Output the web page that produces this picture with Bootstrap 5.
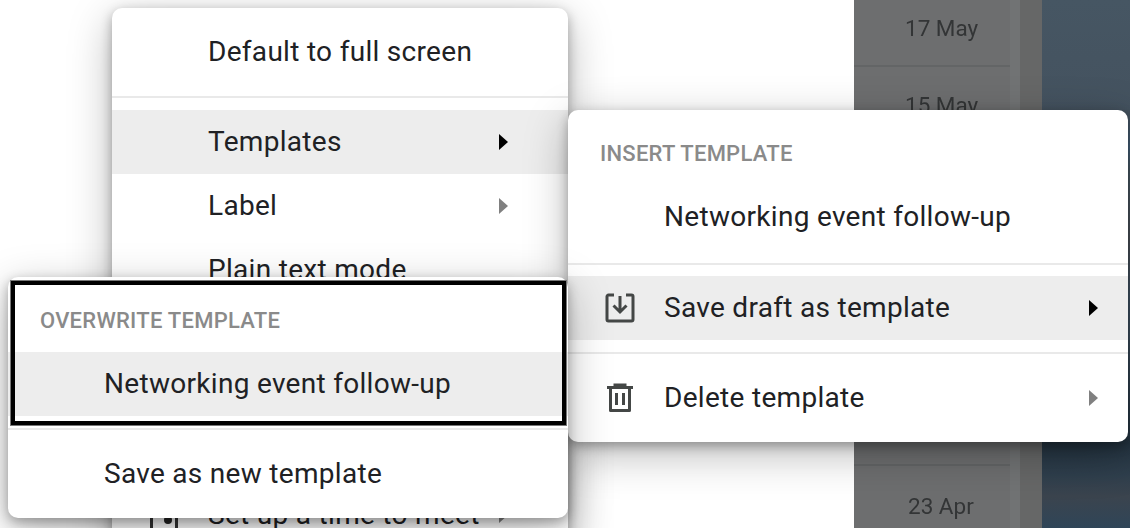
<!DOCTYPE html>
<html lang="en">
<head>
<meta charset="utf-8">
<title>Templates menu</title>
<link href="https://cdn.jsdelivr.net/npm/bootstrap@5.3.0/dist/css/bootstrap.min.css" rel="stylesheet">
<style>
html,body{width:1130px;height:528px;overflow:hidden;margin:0;background:#fff;font-family:Roboto,"Liberation Sans",sans-serif}
.stage{position:relative;width:1130px;height:528px;overflow:hidden}
.blank-area{width:854px}
.mail-list{width:156px;background:#6d6e6f;color:#333536;font-size:22.5px}
.date-text{filter:blur(.5px)}
.date-row{border-bottom:2px solid #636566;padding-left:51px;line-height:1}
.date-row.top{height:67px;padding-top:17px}
.date-row.mid{height:399px;padding-top:27px;overflow:hidden}
.date-row.low{height:62px;padding-left:54px;border:0;padding-top:29px}
.scroll-track{width:10px;background:#717374}
.scroll-gap{width:22px;background:#666767}
.photo{flex:1;background:linear-gradient(#465663 0,#44525f 22%,#44607a 28%,#485965 32%,#4a5058 46%,#3f5264 56%,#3a4c5c 64%,#243441 84%,#2f3f4d 90%,#3b444e 94%,#2f4558 100%)}
.menu-panel{position:absolute;display:block;margin:0;padding:0;background:#fff;border:0;border-radius:10px;color:#202124;font-size:26px;box-shadow:0 4px 12px rgba(0,0,0,.3),0 12px 44px rgba(0,0,0,.28);min-width:0}
.main-panel{left:112px;top:8px;width:456px;height:560px;z-index:1}
.right-panel{left:568px;top:110px;width:560px;height:332px;z-index:2}
.left-panel{left:8px;top:277px;width:560px;height:241px;z-index:3}
.menu-row{height:64px;display:flex;align-items:center;padding:0 32px 0 96px;color:#202124;font-size:28px;letter-spacing:.3px;line-height:1;position:relative;white-space:nowrap}
.menu-row.on{background:#ededed}
.left-panel .menu-row,.right-panel .menu-row{padding-left:96px}
.rule{height:2px;background:#e9e9e9;margin:0;border:0;opacity:1}
.head-row{color:#8a8a8a;font-size:22px;font-weight:500;letter-spacing:.25px;padding:0 32px;line-height:1;text-transform:uppercase}
.arrow{position:absolute;right:60px;top:50%;margin-top:-8px;width:0;height:0;border-left:9px solid #000;border-top:8px solid transparent;border-bottom:8px solid transparent}
.right-panel .arrow{right:30px}
.arrow.dim{border-left-color:#808080}
.row-icon{position:absolute;left:36px;top:50%;margin-top:-16px;width:32px;height:32px}
.peek-icon{left:38px;margin-top:-10px;width:28px;height:28px}
.mark-box{position:absolute;left:10px;top:280px;width:557px;height:146px;border:5px solid #000;outline:1px solid #777;outline-offset:-1px;z-index:4;pointer-events:none}
.gap-a{height:11px}.gap-b{height:13px}.gap-c{height:12px}.gap-d{height:14px}.gap-tail{height:181px}
.head-tall{padding-top:33px;height:75px}
</style>
</head>
<body>
<div class="stage">
  <div class="d-flex h-100">
    <div class="blank-area"></div>
    <div class="mail-list">
      <div class="date-row top"><div class="date-text">17 May</div></div>
      <div class="date-row mid"><div class="date-text">15 May</div></div>
      <div class="date-row low"><div class="date-text">23 Apr</div></div>
    </div>
    <div class="scroll-track"></div>
    <div class="scroll-gap"></div>
    <div class="photo"></div>
  </div>

  <div class="dropdown-menu menu-panel main-panel">
    <div class="gap-c"></div>
    <div class="menu-row">Default to full screen</div>
    <div class="gap-c"></div>
    <hr class="rule">
    <div class="gap-c"></div>
    <div class="menu-row on">Templates<span class="arrow"></span></div>
    <div class="menu-row">Label<span class="arrow dim"></span></div>
    <div class="menu-row">Plain text mode</div>
    <div class="gap-tail"></div>
    <div class="menu-row">Set up a time to meet<span class="arrow dim"></span>
      <svg class="row-icon peek-icon" viewBox="0 0 28 28" aria-hidden="true"><rect x="1.500" y="1.500" width="25" height="25" fill="none" stroke="#333" stroke-width="3"/><circle cx="18" cy="15" r="4" fill="#222"/></svg>
    </div>
  </div>

  <div class="dropdown-menu menu-panel right-panel">
    <div class="head-row head-tall">Insert template</div>
    <div class="menu-row">Networking event follow-up</div>
    <div class="gap-d"></div>
    <hr class="rule">
    <div class="gap-a"></div>
    <div class="menu-row on">
      <svg class="row-icon" viewBox="0 0 32 32" aria-hidden="true"><path d="M10 3H4.500A1.500 1.500 0 0 0 3 4.500v23A1.500 1.500 0 0 0 4.500 29h23a1.500 1.500 0 0 0 1.500-1.500v-23A1.500 1.500 0 0 0 27.500 3H22" fill="none" stroke="#444746" stroke-width="3"/><path d="M16 4v15M9.500 13.500 16 20l6.500-6.500" fill="none" stroke="#444746" stroke-width="3"/></svg>
      Save draft as template<span class="arrow"></span></div>
    <div class="gap-c"></div>
    <hr class="rule">
    <div class="gap-c"></div>
    <div class="menu-row">
      <svg class="row-icon" viewBox="0 0 32 32" aria-hidden="true"><path d="M3 5.500h26M11 5V3h10v2" fill="none" stroke="#444746" stroke-width="3"/><path d="M6.500 6v22.500h19V6" fill="none" stroke="#444746" stroke-width="3" stroke-linejoin="round"/><path d="M12.500 11v12M19.500 11v12" fill="none" stroke="#444746" stroke-width="3"/></svg>
      Delete template<span class="arrow dim"></span></div>
  </div>

  <div class="dropdown-menu menu-panel left-panel">
    <div class="head-row head-tall">Overwrite template</div>
    <div class="menu-row on">Networking event follow-up</div>
    <div class="gap-c"></div>
    <hr class="rule">
    <div class="gap-c"></div>
    <div class="menu-row">Save as new template</div>
  </div>
  <div class="mark-box"></div>
</div>
<script src="https://cdn.jsdelivr.net/npm/bootstrap@5.3.0/dist/js/bootstrap.bundle.min.js"></script>
</body>
</html>
